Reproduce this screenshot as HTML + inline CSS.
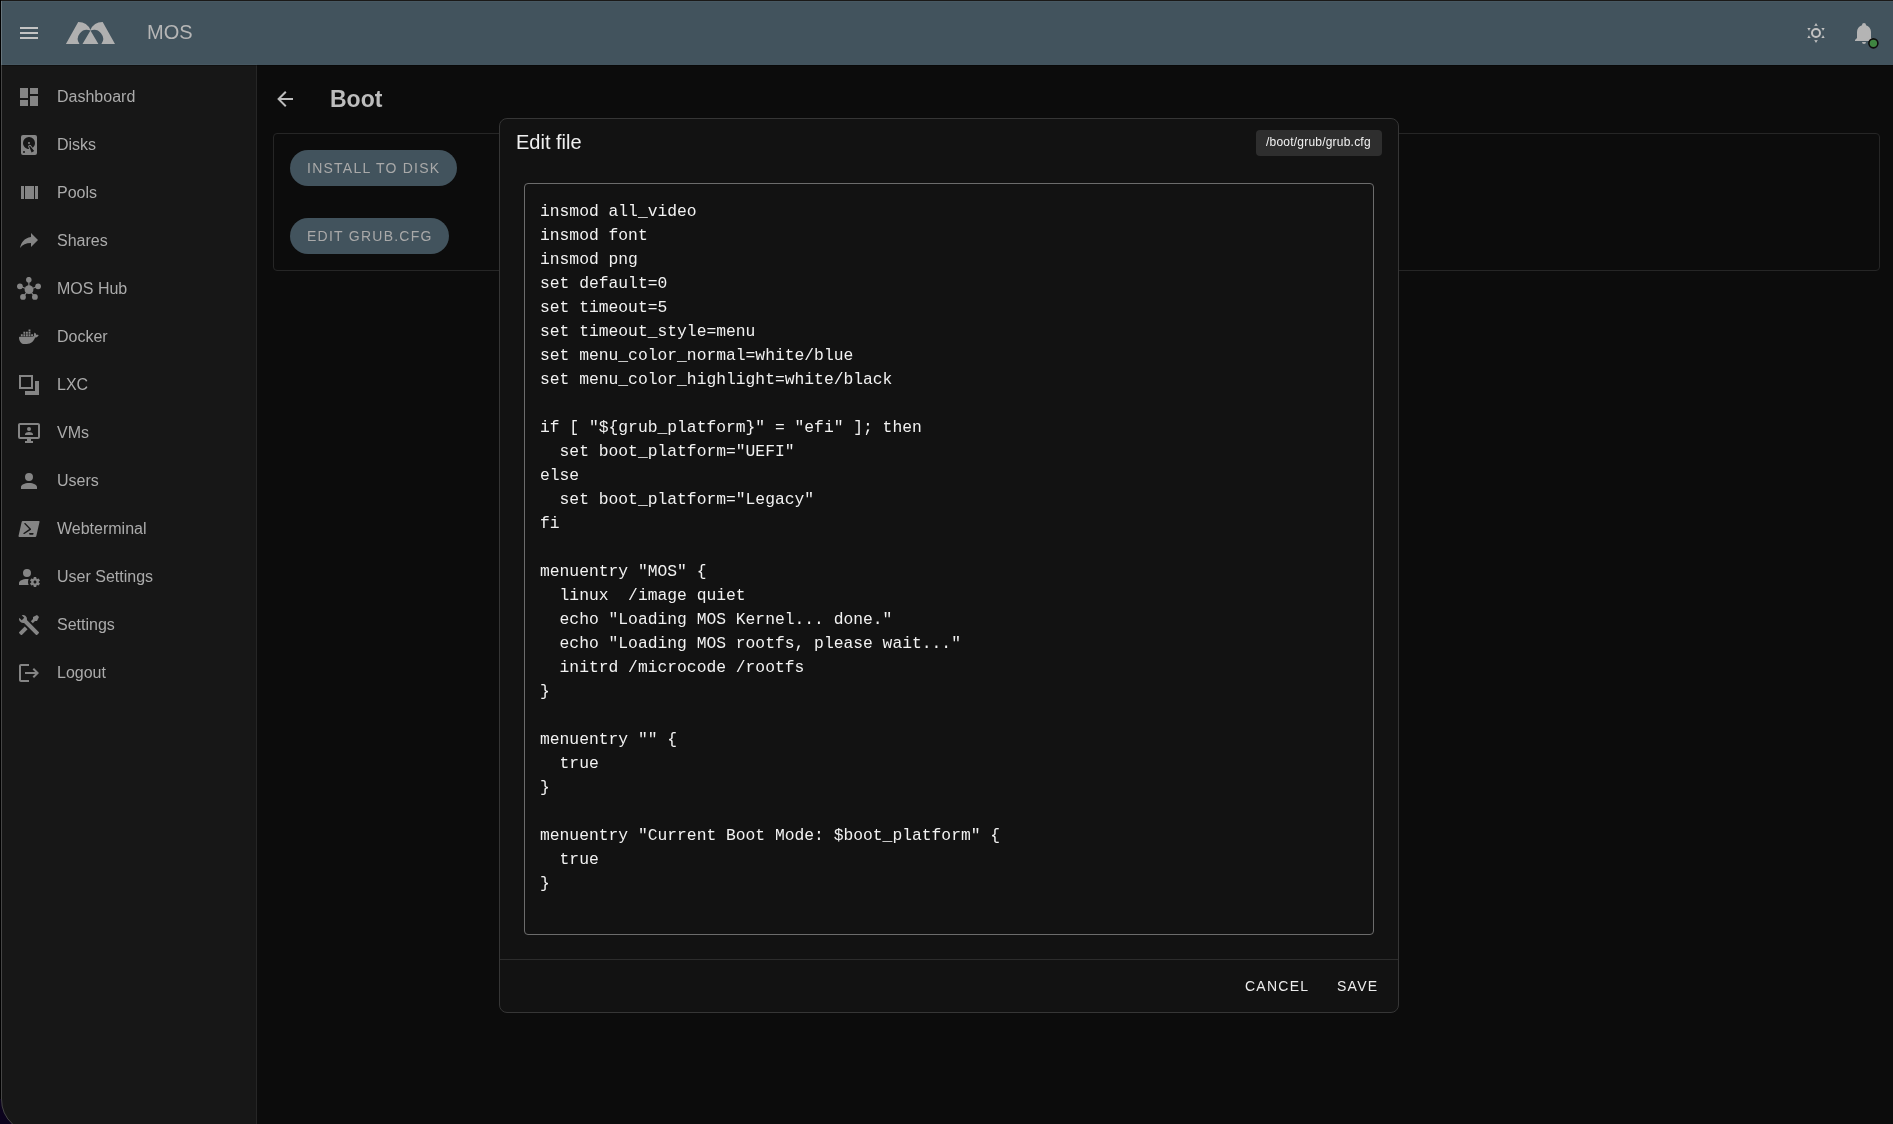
<!DOCTYPE html>
<html><head><meta charset="utf-8">
<style>
*{margin:0;padding:0;box-sizing:border-box}
html,body{width:1893px;height:1124px;overflow:hidden;background:#0c0c0c;font-family:"Liberation Sans",sans-serif}
body>div,body>svg{will-change:transform}
.a{position:absolute}
#top{left:0;top:0;width:1893px;height:1px;background:#1a1918}
#hdr{left:0;top:1px;width:1893px;height:64px;background:#42535d}
#side{left:0;top:65px;width:257px;height:1059px;background:#171717;border-right:1px solid #262626}
#lb{left:0;top:0;width:1px;height:1124px;background:#000}
.it{position:absolute;left:57px;font-size:16px;line-height:24px;color:#ababab;white-space:nowrap}
.ic{position:absolute;left:17px;width:24px;height:24px}
.ic{fill:#858585}
#card{left:273px;top:133px;width:1607px;height:138px;border:1px solid #262626;border-radius:4px;background:#0c0c0c}
.btn{position:absolute;left:290px;height:36px;border-radius:18px;background:#42535d;color:#a9a9a9;font-size:14px;letter-spacing:1.25px;line-height:36px;padding-left:17px;white-space:nowrap}
#dlg{left:499px;top:118px;width:900px;height:895px;background:#121212;border:1px solid #363636;border-radius:8px}
#ta{left:524px;top:183px;width:850px;height:752px;border:1px solid #6c6c6c;border-radius:4px}
#code{left:540px;top:200px;font-family:"Liberation Mono",monospace;font-size:16.32px;line-height:24px;color:#f2f2f2;white-space:pre}
#div{left:500px;top:959px;width:898px;height:1px;background:#2c2c2c}
.act{position:absolute;font-size:14px;letter-spacing:1.25px;line-height:20px;color:#ececec;white-space:nowrap}
#chip{left:1256px;top:130px;width:126px;height:26px;background:#2e2e2e;border-radius:4px}
</style></head><body>
<div id="top" class="a"></div>
<div id="hdr" class="a"></div>
<div id="side" class="a"></div>
<div id="card" class="a"></div>

<!-- header -->
<svg class="a" style="left:17px;top:21px" width="24" height="24" viewBox="0 0 24 24"><path fill="#c4c4c4" d="M3,6H21V8H3V6M3,11H21V13H3V11M3,16H21V18H3V16Z"/></svg>
<svg class="a" style="left:60px;top:16px" width="60" height="34" viewBox="60 16 60 34"><path fill="#b0b0b0" d="M65.9,44 L78.2,21.9 A13.1,13.1 0 0 1 90.45,29.9 L90.45,30.6 A9,9 0 0 0 79.5,44 Z M115,44 L102.7,21.9 A13.1,13.1 0 0 0 90.45,29.9 L90.45,30.6 A9,9 0 0 1 101.4,44 Z M82.5,44 L90.45,30.6 L98.4,44 Z"/></svg>
<div class="a" style="left:147px;top:22px;font-size:20px;line-height:20px;color:#b6b6b6">MOS</div>

<svg class="a" style="left:1804px;top:21px" width="24" height="24" viewBox="-12 -12 24 24"><defs><mask id="m1"><rect x="-12" y="-12" width="24" height="24" fill="#fff"/><circle r="7.3" fill="#000"/></mask></defs><path fill="#c2c2c2" mask="url(#m1)" d="M0,-10.0L8.66,5.0L-8.66,5.0Z M0,10.0L8.66,-5.0L-8.66,-5.0Z"/><circle r="4" fill="none" stroke="#c2c2c2" stroke-width="2"/></svg>
<svg class="a" style="left:1852px;top:21px" width="24" height="24" viewBox="0 0 24 24"><path fill="#b4b4b4" d="M21,19V20H3V19L5,17V11C5,7.9 7.03,5.17 10,4.29C10,4.19 10,4.1 10,4A2,2 0 0,1 12,2A2,2 0 0,1 14,4C14,4.1 14,4.19 14,4.29C16.97,5.17 19,7.9 19,11V17L21,19M14,21A2,2 0 0,1 12,23A2,2 0 0,1 10,21"/></svg>
<svg class="a" style="left:1866px;top:36px" width="15" height="15" viewBox="0 0 15 15"><circle cx="7.4" cy="7.35" r="4.5" fill="#3f8541" stroke="#0e0e0e" stroke-width="1.6"/></svg>

<!-- sidebar -->
<!--NAV-->
<svg class="ic" style="top:85px" viewBox="0 0 24 24"><path d="M13,3V9H21V3M13,21H21V11H13M3,21H11V15H3M3,13H11V3H3V13Z"/></svg><div class="it" style="top:85px">Dashboard</div>
<svg class="ic" style="top:133px" viewBox="0 0 24 24"><path fill-rule="evenodd" d="M6,2H18A2,2 0 0,1 20,4V20A2,2 0 0,1 18,22H6A2,2 0 0,1 4,20V4A2,2 0 0,1 6,2M12,4A6,6 0 0,0 6,10C6,13.31 8.69,16 12.1,16L11.22,13.77C10.95,13.29 11.11,12.68 11.59,12.4L12.45,11.9C12.93,11.63 13.54,11.79 13.82,12.27L15.74,14.69C17.12,13.59 18,11.9 18,10A6,6 0 0,0 12,4M12,9A1,1 0 0,1 13,10A1,1 0 0,1 12,11A1,1 0 0,1 11,10A1,1 0 0,1 12,9M7,18A1,1 0 0,0 6,19A1,1 0 0,0 7,20A1,1 0 0,0 8,19A1,1 0 0,0 7,18M12.09,13.27L14.58,19.58L17.17,18.08L12.95,12.77L12.09,13.27Z"/></svg><div class="it" style="top:133px">Disks</div>
<svg class="ic" style="top:181px" viewBox="0 0 24 24"><path d="M8,18H17V5H8M18,5V18H21V5M4,18H7V5H4V18Z"/></svg><div class="it" style="top:181px">Pools</div>
<svg class="ic" style="top:229px" viewBox="0 0 24 24"><path d="M21,11L14,4V8C7,9 4,14 3,19C5.5,15.5 9,13.9 14,13.9V18L21,11Z"/></svg><div class="it" style="top:229px">Shares</div>
<svg class="ic" style="top:277px" viewBox="0 0 24 24"><circle cx="12" cy="12.7" r="4.4"/><circle cx="11.8" cy="2.7" r="2.8"/><circle cx="2.9" cy="9.3" r="2.9"/><circle cx="21.1" cy="9.3" r="2.9"/><circle cx="6" cy="19.9" r="2.9"/><circle cx="17.9" cy="19.9" r="2.9"/><path d="M11.8,2.7L12,12.7M2.9,9.3L12,12.7M21.1,9.3L12,12.7M6,19.9L12,12.7M17.9,19.9L12,12.7" stroke="#858585" stroke-width="1.2" fill="none"/></svg><div class="it" style="top:277px">MOS Hub</div>
<svg class="ic" style="top:325px" viewBox="0 0 24 24"><path d="M21.81 10.25C21.75 10.21 21.25 9.83 20.17 9.83C19.89 9.83 19.61 9.86 19.33 9.91C19.12 8.5 17.95 7.8 17.9 7.77L17.61 7.61L17.43 7.88C17.19 8.25 17 8.66 16.92 9.09C16.72 9.89 16.84 10.650 17.25 11.3C16.76 11.58 15.96 11.65 15.79 11.66H2.62C2.28 11.66 2 11.94 2 12.28C2 13.42 2.18 14.55 2.57 15.62C3 16.76 3.65 17.61 4.5 18.13C5.46 18.71 7 19.05 8.77 19.05C9.53 19.05 10.31 19 11.08 18.84C12.15 18.65 13.18 18.27 14.12 17.73C14.89 17.28 15.58 16.71 16.17 16.05C17.15 14.94 17.73 13.71 18.16 12.61H18.33C19.4 12.61 20.06 12.18 20.42 11.82C20.66 11.6 20.83 11.33 20.96 11.02L21.04 10.79L21.81 10.25M3.85 11.17H5.71V9.19H3.85V11.17M6.41 11.17H8.27V9.19H6.41V11.17M9 11.17H10.84V9.19H9V11.17M11.55 11.17H13.42V9.19H11.55V11.17M6.41 8.77H8.27V6.78H6.41V8.77M9 8.77H10.84V6.78H9V8.77M11.55 8.77H13.42V6.78H11.55V8.77M11.55 6.36H13.42V4.38H11.55V6.36M14.12 11.17H16V9.19H14.12V11.17Z"/></svg><div class="it" style="top:325px">Docker</div>
<svg class="ic" style="top:373px" viewBox="0 0 24 24"><path fill-rule="evenodd" d="M2,2H16V16H2Z M4,4V14H14V4Z M18,8H22V22H8V18H18Z"/></svg><div class="it" style="top:373px">LXC</div>
<svg class="ic" style="top:421px" viewBox="0 0 24 24"><path fill-rule="evenodd" d="M21,2H3C1.89,2 1,2.89 1,4V16A2,2 0 0,0 3,18H10V20H8V22H16V20H14V18H21A2,2 0 0,0 23,16V4C23,2.89 22.1,2 21,2M21,16H3V4H21V16Z"/><circle cx="12" cy="8" r="2"/><path d="M8,14V13.3C8,11.9 10.5,11 12,11C13.5,11 16,11.9 16,13.3V14Z"/></svg><div class="it" style="top:421px">VMs</div>
<svg class="ic" style="top:469px" viewBox="0 0 24 24"><path d="M12,4A4,4 0 0,1 16,8A4,4 0 0,1 12,12A4,4 0 0,1 8,8A4,4 0 0,1 12,4M12,14C16.42,14 20,15.79 20,18V20H4V18C4,15.79 7.58,14 12,14Z"/></svg><div class="it" style="top:469px">Users</div>
<svg class="ic" style="top:517px" viewBox="0 0 24 24"><path fill-rule="evenodd" d="M21.83,4C22.32,4 22.63,4.4 22.5,4.89L19.34,19.11C19.23,19.6 18.75,20 18.26,20H2.17C1.68,20 1.37,19.6 1.5,19.11L4.66,4.89C4.77,4.4 5.25,4 5.74,4H21.83M15.83,16H12.83C12.37,16 12,16.38 12,16.84C12,17.31 12.37,17.68 12.83,17.68H15.83C16.3,17.68 16.68,17.31 16.68,16.84C16.68,16.38 16.3,16 15.83,16M13.92,12.63C14.15,12.4 14.1,12.03 13.87,11.84L8.3,6.06C8.07,5.82 7.7,5.82 7.46,6.06C7.23,6.3 7.23,6.67 7.46,6.91L12.23,11.93L6.56,16.1C6.32,16.34 6.32,16.71 6.56,16.95C6.8,17.18 7.17,17.18 7.41,16.95L13.92,12.63Z"/></svg><div class="it" style="top:517px">Webterminal</div>
<svg class="ic" style="top:565px" viewBox="0 0 24 24"><path fill-rule="evenodd" d="M10 4A4 4 0 0 0 6 8A4 4 0 0 0 10 12A4 4 0 0 0 14 8A4 4 0 0 0 10 4M17 12C16.87 12 16.76 12.09 16.74 12.21L16.55 13.53C16.25 13.66 15.96 13.82 15.7 14L14.46 13.5C14.35 13.5 14.22 13.5 14.15 13.63L13.15 15.36C13.09 15.47 13.11 15.6 13.21 15.68L14.27 16.5C14.25 16.67 14.24 16.83 14.24 17C14.24 17.17 14.25 17.33 14.27 17.5L13.21 18.32C13.12 18.4 13.09 18.53 13.15 18.64L14.15 20.37C14.21 20.5 14.34 20.5 14.46 20.5L15.7 20C15.96 20.18 16.24 20.35 16.55 20.47L16.74 21.79C16.76 21.91 16.86 22 17 22H19C19.11 22 19.22 21.91 19.24 21.79L19.43 20.47C19.73 20.34 20 20.18 20.27 20L21.5 20.5C21.63 20.5 21.76 20.5 21.83 20.37L22.83 18.64C22.89 18.53 22.86 18.4 22.77 18.32L21.7 17.5C21.72 17.33 21.74 17.17 21.74 17C21.74 16.83 21.73 16.67 21.7 16.5L22.76 15.68C22.85 15.6 22.88 15.47 22.82 15.36L21.82 13.63C21.76 13.5 21.63 13.5 21.5 13.5L20.27 14C20 13.82 19.73 13.65 19.42 13.53L19.23 12.21C19.22 12.09 19.11 12 19 12H17M10 14C5.58 14 2 15.79 2 18V20H11.68A7 7 0 0 1 11 17A7 7 0 0 1 11.64 14.09C11.11 14.03 10.56 14 10 14M18 15.5C18.83 15.5 19.5 16.17 19.5 17C19.5 17.83 18.83 18.5 18 18.5C17.16 18.5 16.5 17.830 16.5 17C16.5 16.17 17.17 15.5 18 15.5Z"/></svg><div class="it" style="top:565px">User Settings</div>
<svg class="ic" style="top:613px" viewBox="0 0 24 24"><path d="M21.71 20.29L20.29 21.71A1 1 0 0 1 18.88 21.71L7.05 9.9A3.87 3.87 0 0 1 6 10A4 4 0 0 1 2.22 4.7L4.76 7.24L5.29 6.71L6.71 5.29L7.24 4.76L4.7 2.22A4 4 0 0 1 10 6A3.87 3.87 0 0 1 9.9 7.05L21.71 18.88A1 1 0 0 1 21.71 20.29M2.29 18.88A1 1 0 0 0 2.29 20.29L3.71 21.71A1 1 0 0 0 5.12 21.71L10.59 16.25L7.76 13.42M20 2L16 4V6L13.83 8.17L15.83 10.17L18 8H20L22 4Z"/></svg><div class="it" style="top:613px">Settings</div>
<svg class="ic" style="top:661px" viewBox="0 0 24 24"><path d="M17 7L15.59 8.41L18.17 11H8V13H18.17L15.59 15.58L17 17L22 12M4 5H12V3H4C2.9 3 2 3.9 2 5V19C2 20.1 2.9 21 4 21H12V19H4V5Z"/></svg><div class="it" style="top:661px">Logout</div>
<!--/NAV-->

<!-- main -->
<svg class="a" style="left:273px;top:87px" width="24" height="24" viewBox="0 0 24 24"><path fill="#bdbdbd" d="M20,11V13H8L13.5,18.5L12.09,19.91L4.18,12L12.09,4.09L13.5,5.5L8,11H20Z"/></svg>
<div class="a" style="left:330px;top:83px;font-size:23px;line-height:32px;font-weight:bold;color:#bdbdbd">Boot</div>
<div class="btn" style="top:150px;width:167px">INSTALL TO DISK</div>
<div class="btn" style="top:218px;width:159px">EDIT GRUB.CFG</div>

<!-- dialog -->
<div id="dlg" class="a"></div>
<div class="a" style="left:516px;top:126px;font-size:20px;line-height:32px;color:#f0f0f0">Edit file</div>
<div id="chip" class="a"></div>
<div class="a" style="left:1266px;top:134px;font-size:12px;line-height:16px;letter-spacing:0.214px;color:#f2f2f2">/boot/grub/grub.cfg</div>
<div id="ta" class="a"></div>
<div id="code" class="a">insmod all_video
insmod font
insmod png
set default=0
set timeout=5
set timeout_style=menu
set menu_color_normal=white/blue
set menu_color_highlight=white/black

if [ "${grub_platform}" = "efi" ]; then
  set boot_platform="UEFI"
else
  set boot_platform="Legacy"
fi

menuentry "MOS" {
  linux  /image quiet
  echo "Loading MOS Kernel... done."
  echo "Loading MOS rootfs, please wait..."
  initrd /microcode /rootfs
}

menuentry "" {
  true
}

menuentry "Current Boot Mode: $boot_platform" {
  true
}</div>
<div id="div" class="a"></div>
<div class="act" style="left:1245px;top:976px">CANCEL</div>
<div class="act" style="left:1337px;top:976px">SAVE</div>

<div class="a" style="left:1px;top:1px;width:1px;height:1083px;background:rgba(255,255,255,0.2)"></div>
<div class="a" style="left:2px;top:1px;width:1891px;height:1px;background:rgba(255,255,255,0.03)"></div>
<div class="a" style="left:2px;top:64px;width:255px;height:1px;background:rgba(255,255,255,0.03)"></div>
<div class="a" style="left:2px;top:65px;width:1891px;height:1px;background:rgba(0,0,0,0.3)"></div>
<svg class="a" style="left:0;top:1084px;z-index:5" width="40" height="40" viewBox="0 1084 40 40"><path fill="#0c031d" d="M0,1099 L0,1124 L11.96,1124 A34,34 0 0 1 1,1099 Z"/><path d="M1.5,1084 L1.5,1099 A33.5,33.5 0 0 0 12.5,1124" fill="none" stroke="rgba(255,255,255,0.2)" stroke-width="1"/></svg>
<div id="lb" class="a"></div>
</body></html>
